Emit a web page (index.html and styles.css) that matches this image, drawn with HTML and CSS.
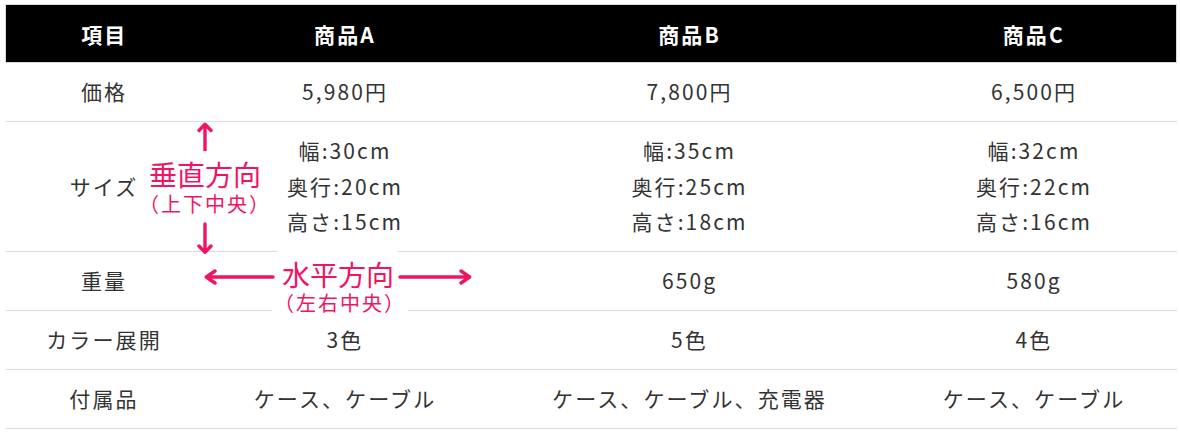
FILE: index.html
```html
<!DOCTYPE html>
<html lang="ja">
<head>
<meta charset="utf-8">
<title>比較表</title>
<link rel="stylesheet" href="styles.css">
</head>
<body>
<div class="page">
  <table class="spec">
    <colgroup>
      <col class="c1"><col class="c2"><col class="c3"><col class="c4">
    </colgroup>
    <thead>
      <tr><th>項目</th><th>商品A</th><th>商品B</th><th>商品C</th></tr>
    </thead>
    <tbody>
      <tr><td>価格</td><td>5,980円</td><td>7,800円</td><td>6,500円</td></tr>
      <tr><td>サイズ</td><td>幅:30cm<br>奥行:20cm<br>高さ:15cm</td><td>幅:35cm<br>奥行:25cm<br>高さ:18cm</td><td>幅:32cm<br>奥行:22cm<br>高さ:16cm</td></tr>
      <tr><td>重量</td><td></td><td>650g</td><td>580g</td></tr>
      <tr><td>カラー展開</td><td>3色</td><td>5色</td><td>4色</td></tr>
      <tr><td>付属品</td><td>ケース、ケーブル</td><td>ケース、ケーブル、充電器</td><td>ケース、ケーブル</td></tr>
    </tbody>
  </table>

  <div class="vann">
    <svg class="arrow-up" width="20" height="30" viewBox="0 0 20 30"><path d="M10 3.5V29M4 9.5L10 3.2L16 9.5" fill="none" stroke="currentColor" stroke-width="3.4" stroke-linecap="round" stroke-linejoin="round"/></svg>
    <div class="ann-main">垂直方向</div>
    <div class="ann-sub">（上下中央）</div>
    <svg class="arrow-down" width="20" height="32" viewBox="0 0 20 32"><path d="M10 2V29.5M4 24L10 30.3L16 24" fill="none" stroke="currentColor" stroke-width="3.4" stroke-linecap="round" stroke-linejoin="round"/></svg>
  </div>

  <svg class="arrow-left" width="72" height="20" viewBox="0 0 72 20"><path d="M3.5 10H70M12 4L3.3 10L12 16" fill="none" stroke="currentColor" stroke-width="3.4" stroke-linecap="round" stroke-linejoin="round"/></svg>
  <div class="hbox-main">水平方向</div>
  <div class="hbox-sub">（左右中央）</div>
  <svg class="arrow-right" width="76" height="20" viewBox="0 0 76 20"><path d="M2 10H71.5M63 4L71.7 10L63 16" fill="none" stroke="currentColor" stroke-width="3.4" stroke-linecap="round" stroke-linejoin="round"/></svg>
</div>
</body>
</html>
```

FILE: styles.css
```css
html, body {
  margin: 0;
  padding: 0;
  background: #fff;
}

body {
  font-family: "Noto Sans CJK JP", "Noto Sans", sans-serif;
  color: #333;
}

.page {
  position: relative;
  padding: 4px 5px 0;
  width: 1171px;
}

.spec {
  width: 1171px;
  table-layout: fixed;
  border-collapse: collapse;
  font-size: 21px;
  letter-spacing: 0.1em;
  line-height: 35.5px;
}

.c1 { width: 197px; }
.c2 { width: 285px; }
.c3 { width: 404px; }
.c4 { width: 285px; }

.spec th {
  background: #000;
  color: #fff;
  font-weight: 700;
  padding: 11.5px 0 10px;
  text-align: center;
  border-top: 1px solid #d8d8d8;
  border-bottom: 1px solid #d8d8d8;
}

.spec th:first-child { border-left: 1px solid #d8d8d8; }
.spec th:last-child { border-right: 1px solid #d8d8d8; }

.spec td {
  padding: 11.25px 0;
  text-align: center;
  vertical-align: middle;
  border-bottom: 1px solid #dcdcdc;
}

/* annotations */
.vann {
  position: absolute;
  left: 125px;
  top: 121px;
  width: 160px;
  display: flex;
  flex-direction: column;
  align-items: center;
  color: #ef1464;
}

.vann svg { display: block; }

.ann-main {
  margin-top: 8px;
  font-size: 28px;
  line-height: 30px;
  font-weight: 400;
  white-space: nowrap;
}

.ann-sub {
  margin-top: 2px;
  font-size: 20px;
  line-height: 26px;
  font-weight: 400;
  letter-spacing: 2px;
  font-feature-settings: "halt" 1;
  white-space: nowrap;
}

.arrow-down { margin-top: 5px; }

.arrow-left,
.arrow-right {
  position: absolute;
  top: 267px;
  color: #ef1464;
  display: block;
}

.arrow-left { left: 203px; }
.arrow-right { left: 398px; }

.hbox-main,
.hbox-sub {
  position: absolute;
  background: #fff;
  color: #ef1464;
  font-weight: 400;
  white-space: nowrap;
}

.hbox-main {
  left: 278px;
  top: 250px;
  padding: 8px 4px 0;
  font-size: 28px;
  line-height: 32px;
}

.hbox-sub {
  left: 272px;
  top: 290px;
  width: 136px;
  text-align: center;
  box-sizing: border-box;
  font-size: 20px;
  line-height: 26px;
  letter-spacing: 2px;
  font-feature-settings: "halt" 1;
}
```
